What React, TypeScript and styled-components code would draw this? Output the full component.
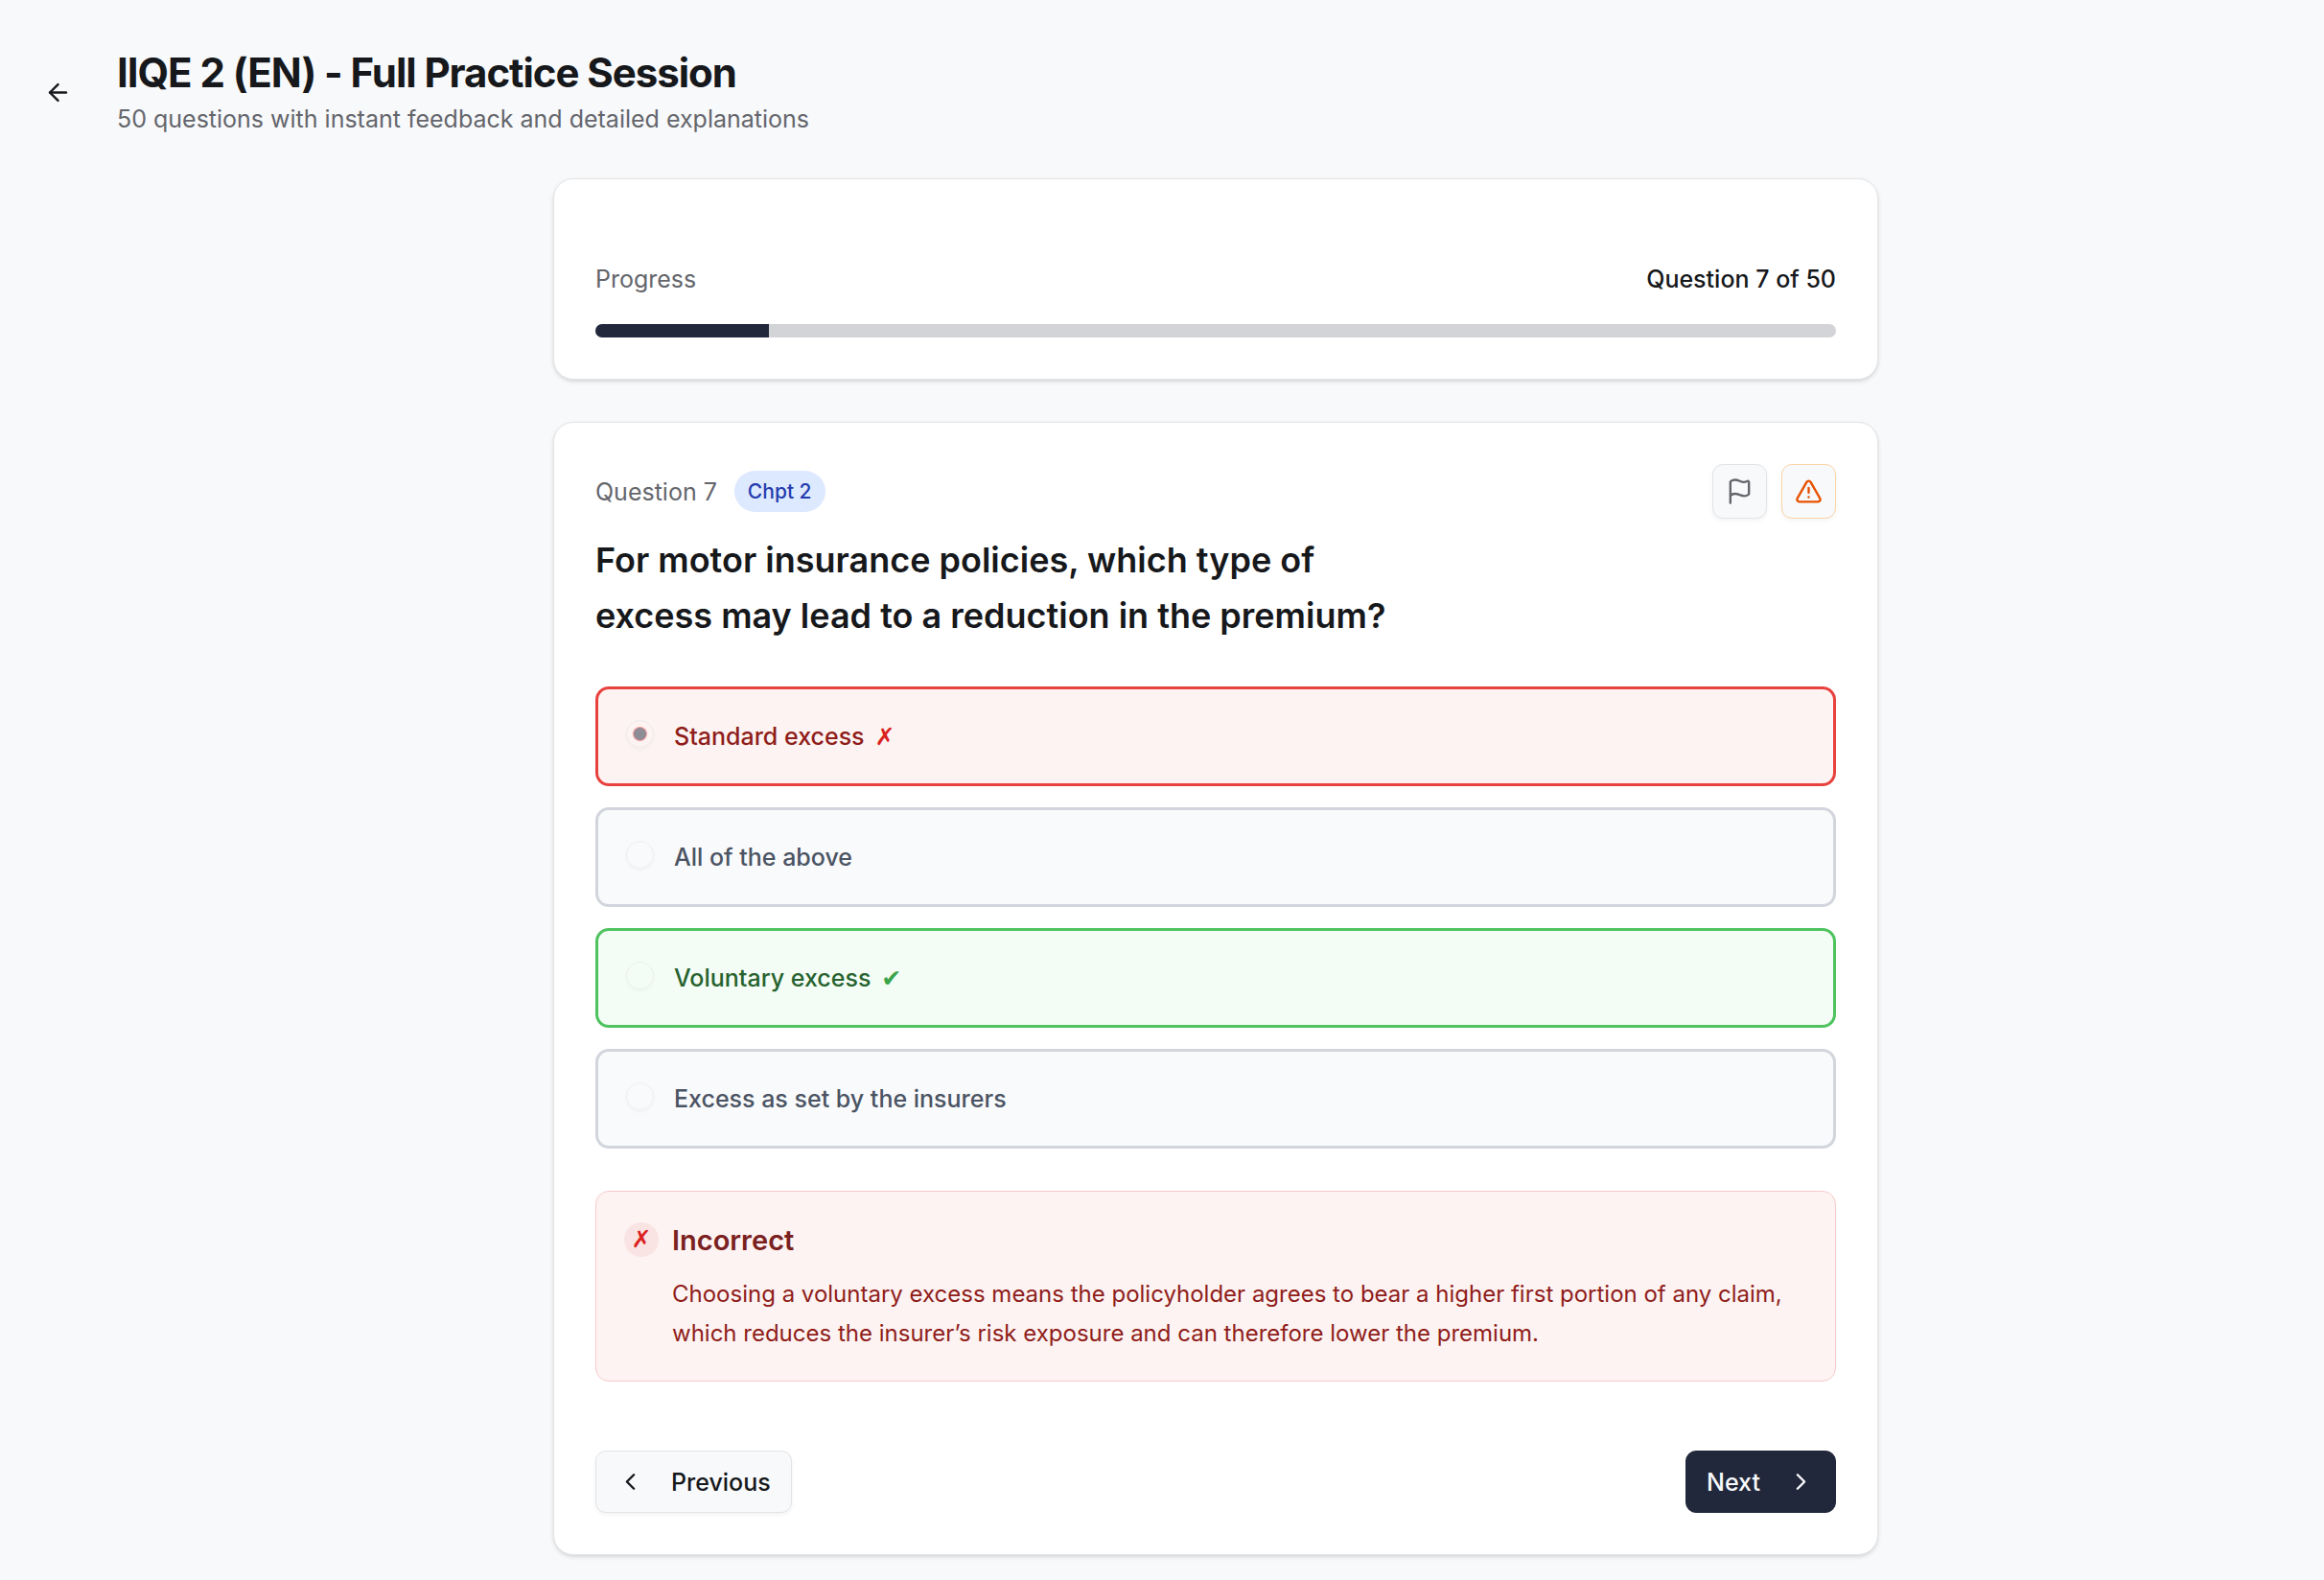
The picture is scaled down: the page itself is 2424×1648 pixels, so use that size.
import React, { useState } from "react";
import styled, { createGlobalStyle, css } from "styled-components";
import { ArrowLeft, ChevronLeft, ChevronRight, Flag, TriangleAlert } from "lucide-react";

const GlobalStyle = createGlobalStyle`
  *, *::before, *::after { box-sizing: border-box; }
  body {
    margin: 0;
    background: #f8f9fb;
    color: #16181b;
    font-family: Inter, "Liberation Sans", sans-serif;
    font-size: 25px;
    line-height: 36px;
    -webkit-font-smoothing: antialiased;
  }
  h1, h2, h3, p { margin: 0; }
  button { font: inherit; color: inherit; cursor: pointer; }
`;

const Page = styled.div`
  min-height: 100vh;
  padding: 50px 10px 26px 28px;
`;

const Header = styled.header`
  display: flex;
  align-items: center;
  gap: 29px;
  margin-bottom: 44px;
`;

const BackButton = styled.button`
  display: grid;
  place-items: center;
  width: 65px;
  height: 65px;
  border: 0;
  border-radius: 11px;
  background: transparent;
`;

const Title = styled.h1`
  margin-bottom: 4px;
  font-size: 42px;
  line-height: 52px;
  font-weight: 700;
  letter-spacing: -0.025em;
`;

const Muted = styled.p`
  color: #64666c;
`;

const Main = styled.main`
  display: flex;
  flex-direction: column;
  gap: 44px;
  padding-left: 94px;
`;

const Card = styled.section`
  width: 100%;
  max-width: 1382px;
  margin: 0 auto;
  padding: 43px;
  border: 1px solid #e4e5e7;
  border-radius: 21px;
  background: #fff;
  box-shadow: 0 2px 5px rgba(0, 0, 0, 0.1), 0 2px 4px -2px rgba(0, 0, 0, 0.1);
`;

const ProgressCard = styled(Card)`
  padding-top: 86px;
`;

const Row = styled.div`
  display: flex;
  align-items: center;
  justify-content: space-between;
`;

const Count = styled.span`
  font-weight: 500;
`;

const Track = styled.div`
  height: 14px;
  margin-top: 29px;
  overflow: hidden;
  border-radius: 7px;
  background: #d3d4d8;
`;

const Fill = styled.div`
  height: 100%;
  background: #22283b;
`;

const Group = styled.div<{ $gap: number }>`
  display: flex;
  align-items: center;
  gap: ${(p) => p.$gap}px;
`;

const Badge = styled.span`
  padding: 0 14px;
  border-radius: 22px;
  background: #dde9fe;
  color: #253cae;
  font-size: 21px;
  line-height: 43px;
  font-weight: 500;
`;

const outlined = css`
  border: 1px solid #e2e4e7;
  background: #f8f9fb;
  box-shadow: 0 2px 4px rgba(0, 0, 0, 0.05);
`;

const IconButton = styled.button<{ $warn?: boolean }>`
  display: grid;
  place-items: center;
  width: 57px;
  height: 57px;
  padding: 0;
  border-radius: 11px;
  ${outlined}
  color: #64666c;
  ${(p) => p.$warn && css`
    border-color: #fbd5a5;
    color: #e65100;
  `}
`;

const Question = styled.h2`
  max-width: 850px;
  margin: 14px 0 45px;
  font-size: 36px;
  line-height: 58px;
  font-weight: 600;
`;

const Options = styled.div`
  display: flex;
  flex-direction: column;
  gap: 22px;
`;

type Tone = "wrong" | "right" | "neutral";

const tones = {
  wrong: { border: "#e8423f", fill: "#fdf3f2", text: "#8f1d1a", mark: "#da2220" },
  right: { border: "#4fc35f", fill: "#f3fdf5", text: "#27622f", mark: "#3aa44a" },
  neutral: { border: "#d2d5dc", fill: "#f9fafc", text: "#4b5463", mark: "#4b5463" },
};

const Option = styled.label<{ $tone: Tone }>`
  display: flex;
  align-items: flex-start;
  gap: 21px;
  padding: 29px;
  border: 3px solid ${(p) => tones[p.$tone].border};
  border-radius: 14px;
  background: ${(p) => tones[p.$tone].fill};
  color: ${(p) => tones[p.$tone].text};
  font-weight: 500;
  line-height: 40px;
`;

const Radio = styled.input`
  appearance: none;
  display: grid;
  place-items: center;
  flex: none;
  width: 29px;
  height: 29px;
  margin: 3px 0 0;
  border: 1px solid #e2e4e7;
  border-radius: 50%;
  box-shadow: 0 2px 3px rgba(0, 0, 0, 0.05);
  opacity: 0.5;

  &:checked::before {
    content: "";
    width: 13px;
    height: 13px;
    border-radius: 50%;
    background: #22283b;
    box-shadow: 0 0 0 1px #e8423f;
  }
`;

const Mark = styled.span<{ $tone: Tone }>`
  margin-left: 11px;
  color: ${(p) => tones[p.$tone].mark};
  font-family: "DejaVu Sans", sans-serif;
  font-weight: 700;
  line-height: 1;
`;

const Feedback = styled.div`
  display: flex;
  align-items: flex-start;
  gap: 14px;
  margin-top: 44px;
  padding: 29px;
  border: 1px solid #f9caca;
  border-radius: 14px;
  background: #fdf3f2;
`;

const FeedbackIcon = styled.span`
  flex: none;
  width: 36px;
  margin-top: 3px;
  border-radius: 50%;
  background: #fae3e3;
  color: #da2220;
  font-family: "DejaVu Sans", sans-serif;
  font-weight: 700;
  text-align: center;
`;

const FeedbackTitle = styled.h3`
  margin-bottom: 14px;
  color: #7a211f;
  font-size: 29px;
  line-height: 43px;
  font-weight: 600;
`;

const FeedbackText = styled.p`
  color: #8f1d1a;
  font-size: 24px;
  line-height: 41px;
`;

const Actions = styled(Row)`
  margin-top: 72px;
`;

const NavButton = styled.button<{ $primary?: boolean }>`
  display: flex;
  align-items: center;
  gap: 28px;
  height: 65px;
  padding: 0 21px;
  border-radius: 11px;
  ${outlined}
  font-weight: 500;
  ${(p) => p.$primary && css`
    border-color: #22283b;
    background: #22283b;
    color: #f8fafc;
    box-shadow: none;
  `}
`;

const options: { text: string; tone: Tone; mark?: string }[] = [
  { text: "Standard excess", tone: "wrong", mark: "✗" },
  { text: "All of the above", tone: "neutral" },
  { text: "Voluntary excess", tone: "right", mark: "✔" },
  { text: "Excess as set by the insurers", tone: "neutral" },
];

const current = 7;
const total = 50;

export default function App() {
  const [selected] = useState(0);

  return (
    <>
      <GlobalStyle />
      <Page>
        <Header>
          <BackButton aria-label="Back">
            <ArrowLeft size={29} />
          </BackButton>
          <div>
            <Title>IIQE 2 (EN) - Full Practice Session</Title>
            <Muted>50 questions with instant feedback and detailed explanations</Muted>
          </div>
        </Header>
        <Main>
          <ProgressCard>
            <Row>
              <Muted>Progress</Muted>
              <Count>Question {current} of {total}</Count>
            </Row>
            <Track role="progressbar" aria-label="Progress" aria-valuenow={current} aria-valuemax={total}>
              <Fill style={{ width: `${(current / total) * 100}%` }} />
            </Track>
          </ProgressCard>

          <Card>
            <Row>
              <Group $gap={18}>
                <Muted>Question {current}</Muted>
                <Badge>Chpt 2</Badge>
              </Group>
              <Group $gap={15}>
                <IconButton aria-label="Flag question">
                  <Flag size={29} />
                </IconButton>
                <IconButton $warn aria-label="Report a problem">
                  <TriangleAlert size={29} />
                </IconButton>
              </Group>
            </Row>
            <Question id="question">
              For motor insurance policies, which type of excess may lead to a reduction in the premium?
            </Question>
            <Options role="radiogroup" aria-labelledby="question">
              {options.map((o, i) => (
                <Option key={o.text} $tone={o.tone}>
                  <Radio type="radio" name="answer" checked={i === selected} disabled readOnly />
                  <span>
                    {o.text}
                    {o.mark && <Mark $tone={o.tone}>{o.mark}</Mark>}
                  </span>
                </Option>
              ))}
            </Options>
            <Feedback role="status">
              <FeedbackIcon aria-hidden="true">✗</FeedbackIcon>
              <div>
                <FeedbackTitle>Incorrect</FeedbackTitle>
                <FeedbackText>
                  Choosing a voluntary excess means the policyholder agrees to bear a higher first portion of any
                  claim, which reduces the insurer’s risk exposure and can therefore lower the premium.
                </FeedbackText>
              </div>
            </Feedback>
            <Actions>
              <NavButton>
                <ChevronLeft size={29} />
                Previous
              </NavButton>
              <NavButton $primary>
                Next
                <ChevronRight size={29} />
              </NavButton>
            </Actions>
          </Card>
        </Main>
      </Page>
    </>
  );
}
